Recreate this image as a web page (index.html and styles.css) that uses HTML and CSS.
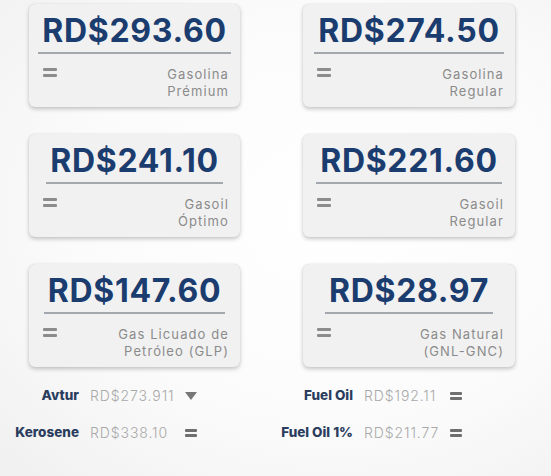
FILE: index.html
```html
<!DOCTYPE html>
<html lang="es">
<head>
<meta charset="utf-8">
<link rel="stylesheet" href="styles.css">
</head>
<body>
<div class="page">
  <div class="cards">
    <div class="card">
      <div class="price">RD$293.60</div>
      <div class="meta"><span class="eq"></span><span class="label">Gasolina<br>Prémium</span></div>
    </div>
    <div class="card">
      <div class="price">RD$274.50</div>
      <div class="meta"><span class="eq"></span><span class="label">Gasolina<br>Regular</span></div>
    </div>
    <div class="card">
      <div class="price">RD$241.10</div>
      <div class="meta"><span class="eq"></span><span class="label">Gasoil<br>Óptimo</span></div>
    </div>
    <div class="card">
      <div class="price">RD$221.60</div>
      <div class="meta"><span class="eq"></span><span class="label">Gasoil<br>Regular</span></div>
    </div>
    <div class="card">
      <div class="price">RD$147.60</div>
      <div class="meta"><span class="eq"></span><span class="label">Gas Licuado de<br>Petróleo (GLP)</span></div>
    </div>
    <div class="card">
      <div class="price">RD$28.97</div>
      <div class="meta"><span class="eq"></span><span class="label">Gas Natural<br>(GNL-GNC)</span></div>
    </div>
  </div>
  <div class="others">
    <div class="group">
      <span class="name">Avtur</span><span class="val">RD$273.911</span><span class="down"></span>
      <span class="name">Kerosene</span><span class="val">RD$338.10</span><span class="eq small"></span>
    </div>
    <div class="group right">
      <span class="name">Fuel Oil</span><span class="val">RD$192.11</span><span class="eq small"></span>
      <span class="name">Fuel Oil 1%</span><span class="val">RD$211.77</span><span class="eq small"></span>
    </div>
  </div>
</div>
</body>
</html>
```
FILE: styles.css
```css
html, body {
  margin: 0;
  padding: 0;
}
body {
  width: 551px;
  height: 476px;
  overflow: hidden;
  font-family: Inter, "Noto Sans", sans-serif;
  background: radial-gradient(ellipse at 60% 45%, #ffffff 0%, #fbfbfb 55%, #f0f0f0 100%);
}
.page {
  padding-top: 4px;
}
.cards {
  display: grid;
  grid-template-columns: 211px 212px;
  column-gap: 63px;
  row-gap: 27px;
  padding-left: 29px;
}
.card {
  height: 103px;
  box-sizing: border-box;
  background: #f1f1f1;
  border-radius: 6px;
  box-shadow: 0 2px 4px rgba(0, 0, 0, 0.22), 0 0 1px rgba(0, 0, 0, 0.15);
  padding-top: 8px;
  display: flex;
  flex-direction: column;
  align-items: center;
}
.price {
  font-weight: 700;
  font-size: 32px;
  line-height: 38px;
  letter-spacing: 0.7px;
  color: #1b3c6e;
  padding: 0 4px 2px;
  border-bottom: 2px solid #a3a7ae;
}
.meta {
  align-self: stretch;
  display: flex;
  justify-content: space-between;
  align-items: flex-start;
  padding: 12px 11px 0 14px;
}
.eq {
  display: block;
  width: 14px;
  height: 3px;
  margin-top: 2px;
  background: #8c8c8c;
  box-shadow: 0 6px 0 #8c8c8c;
  border-radius: 1px;
}
.label {
  text-align: right;
  font-size: 13px;
  line-height: 17px;
  letter-spacing: 1.1px;
  color: #8b8b8b;
}
.others {
  display: flex;
  padding-top: 20px;
}
.group {
  display: grid;
  grid-template-columns: 79px max-content max-content;
  justify-content: start;
  column-gap: 11px;
  row-gap: 20px;
  align-items: center;
  width: 275px;
}
.group.right {
  grid-template-columns: 78px max-content max-content;
}
.name {
  text-align: right;
  font-weight: 800;
  font-size: 13.5px;
  line-height: 17px;
  color: #2b3d5e;
  white-space: nowrap;
}
.val {
  font-size: 14px;
  line-height: 17px;
  font-weight: 300;
  color: #a9a9a9;
  letter-spacing: 0.9px;
}
.down {
  width: 0;
  height: 0;
  border-left: 6px solid transparent;
  border-right: 6px solid transparent;
  border-top: 8px solid #777;
}
.eq.small {
  width: 12px;
  margin-top: -5px;
  background: #6f6f6f;
  box-shadow: 0 5px 0 #6f6f6f;
}
```
